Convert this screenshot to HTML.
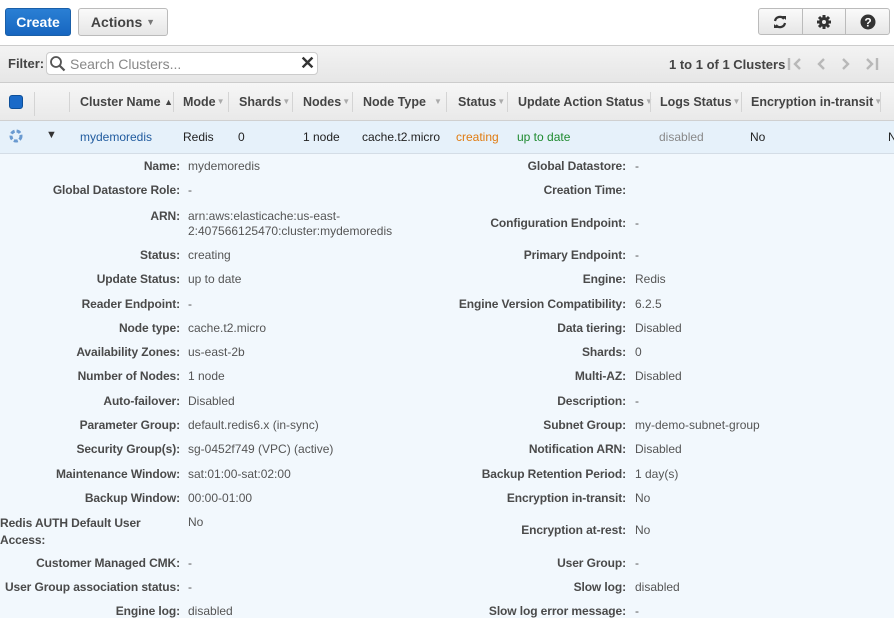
<!DOCTYPE html>
<html><head><meta charset="utf-8"><style>
*{box-sizing:border-box;margin:0;padding:0}
body{width:894px;height:612px;overflow:hidden;background:#f2f8fd;font-family:"Liberation Sans",Arial,sans-serif;font-size:12px;color:#444;position:relative}
.abs{position:absolute}
.top{left:0;top:0;width:894px;height:46px;background:#fff;border-bottom:1px solid #ccc}
.btn{position:absolute;border-radius:3px;font-size:14px;font-weight:bold;text-align:center;line-height:26px}
.create{left:5px;top:8px;width:66px;height:28px;background:linear-gradient(#2a7fd4,#1766c0);color:#fff;border:1px solid #1a5fa8}
.actions{left:78px;top:8px;width:90px;height:28px;background:linear-gradient(#fafafa,#e6e6e6);border:1px solid #bbb;color:#444}
.grp{left:758px;top:8px;width:132px;height:27px;border:1px solid #bbb;border-radius:3px;background:linear-gradient(#fafafa,#e6e6e6);display:flex}
.grp div{flex:1;border-right:1px solid #bbb;display:flex;align-items:center;justify-content:center}
.grp div:last-child{border-right:none}
.filt{left:0;top:46px;width:894px;height:37px;background:linear-gradient(#f3f3f3,#e6e6e6);border-bottom:1px solid #ccc}
.search{left:46px;top:52px;width:272px;height:23px;background:#fff;border:1px solid #ccc;border-radius:4px}
.th{left:0;top:83px;width:894px;height:38px;background:linear-gradient(#f6f6f6,#e9e9e9);border-bottom:1px solid #d0d0d0}
.th .h{position:absolute;top:12px;font-weight:bold;color:#444;font-size:12.5px;white-space:nowrap}
.sep{position:absolute;top:9px;width:1px;height:20px;background:#d4d4d4}
.row{left:0;top:121px;width:894px;height:33px;background:#e6f1fa;border-bottom:1px solid #d4dde6}
.row span{position:absolute;top:9px;font-size:12px;color:#222}
.l{position:absolute;text-align:right;font-weight:bold;color:#4a4a4a;white-space:nowrap;letter-spacing:-0.1px}
.v{position:absolute;color:#555;white-space:nowrap}
.ar{color:#aaa;font-size:8px;font-weight:normal;vertical-align:2px;margin-left:1px}
</style></head><body>
<div class="abs top"></div>
<div class="btn create">Create</div>
<div class="btn actions">Actions <span style="font-size:9px;color:#777;vertical-align:2px">&#9660;</span></div>
<div class="abs grp">
<div><svg width="18" height="18" viewBox="0 0 18 18"><path d="M4 8a5 5 0 0 1 9-2" fill="none" stroke="#333" stroke-width="2.2"/><path d="M14 10a5 5 0 0 1-9 2" fill="none" stroke="#333" stroke-width="2.2"/><path d="M11 3l4 0 0 4z M7 15l-4 0 0-4z" fill="#333"/></svg></div>
<div><svg width="16" height="16" viewBox="0 0 16 16"><circle cx="8" cy="8" r="5" fill="#333"/><g stroke="#333" stroke-width="3"><path d="M8 1v14M1 8h14M3 3l10 10M13 3L3 13"/></g><circle cx="8" cy="8" r="2" fill="#eee"/></svg></div>
<div><svg width="16" height="16" viewBox="0 0 16 16"><circle cx="8" cy="8" r="7.5" fill="#333"/><text x="8" y="12.5" font-size="12" font-weight="bold" text-anchor="middle" fill="#fff" font-family="Liberation Sans">?</text></svg></div>
</div>
<div class="abs filt"></div>
<div class="abs" style="left:8px;top:56px;font-weight:bold;font-size:13px;color:#444">Filter:</div>
<div class="abs search"></div>
<svg class="abs" style="left:49px;top:55px" width="17" height="17" viewBox="0 0 17 17"><circle cx="7" cy="7" r="5" fill="none" stroke="#555" stroke-width="1.8"/><path d="M10.5 10.5l5 5" stroke="#555" stroke-width="2.2"/></svg>
<div class="abs" style="left:70px;top:56px;font-size:14px;color:#888">Search Clusters...</div>
<div class="abs" style="left:300px;top:53px;font-size:18px;color:#333;font-weight:bold">&#10005;</div>
<div class="abs" style="left:669px;top:57px;font-size:13px;font-weight:bold;color:#444">1 to 1 of 1 Clusters</div>
<svg class="abs" style="left:786px;top:56px" width="94" height="16" viewBox="0 0 94 16" fill="none" stroke="#b8b8b8" stroke-width="2.4">
<path d="M3 2v12M14 3l-5 5 5 5"/><path d="M38 3l-5 5 5 5"/><path d="M57 3l5 5-5 5"/><path d="M81 3l5 5-5 5M91 2v12"/></svg>
<div class="abs th">
<div style="position:absolute;left:9px;top:12px;width:14px;height:14px;background:#1a6ac8;border:1px solid #0d4f99;border-radius:3px"></div>
<div class="sep" style="left:34px;height:24px"></div>
<div class="sep" style="left:69px"></div><div class="h" style="left:80px">Cluster Name <span style="font-size:9px;vertical-align:1px">&#9650;</span></div>
<div class="sep" style="left:173px"></div><div class="h" style="left:183px">Mode<span class="ar">&#9660;</span></div>
<div class="sep" style="left:228px"></div><div class="h" style="left:239px">Shards<span class="ar">&#9660;</span></div>
<div class="sep" style="left:292px"></div><div class="h" style="left:303px">Nodes<span class="ar">&#9660;</span></div>
<div class="sep" style="left:352px"></div><div class="h" style="left:363px">Node Type</div><div class="h" style="left:433px"><span class="ar">&#9660;</span></div>
<div class="sep" style="left:446px"></div><div class="h" style="left:458px">Status<span class="ar">&#9660;</span></div>
<div class="sep" style="left:507px"></div><div class="h" style="left:518px">Update Action Status<span class="ar">&#9660;</span></div>
<div class="sep" style="left:650px"></div><div class="h" style="left:660px">Logs Status<span class="ar">&#9660;</span></div>
<div class="sep" style="left:741px"></div><div class="h" style="left:751px">Encryption in-transit<span class="ar">&#9660;</span></div>
<div class="sep" style="left:880px"></div>
</div>
<div class="abs row">
<svg style="position:absolute;left:9px;top:8px" width="14" height="14" viewBox="0 0 14 14"><circle cx="7" cy="7" r="5" fill="none" stroke="#6a9ad0" stroke-width="3" stroke-dasharray="4 2"/></svg>
<span style="left:46px;top:8px;font-size:11px;color:#333">&#9660;</span>
<span style="left:80px;color:#1f5a9e">mydemoredis</span>
<span style="left:183px">Redis</span>
<span style="left:238px">0</span>
<span style="left:303px">1 node</span>
<span style="left:362px">cache.t2.micro</span>
<span style="left:456px;color:#e07b10">creating</span>
<span style="left:517px;color:#1d8a2e">up to date</span>
<span style="left:659px;color:#888">disabled</span>
<span style="left:750px">No</span>
<span style="left:888px">N</span>
</div>
<div class="l" style="right:714px;top:159px">Name:</div><div class="v" style="left:188px;top:159px">mydemoredis</div>
<div class="l" style="right:714px;top:183px">Global Datastore Role:</div><div class="v" style="left:188px;top:183px">-</div>
<div class="l" style="right:714px;top:209px">ARN:</div><div class="v" style="left:188px;top:209px;line-height:15px">arn:aws:elasticache:us-east-<br>2:407566125470:cluster:mydemoredis</div>
<div class="l" style="right:714px;top:248px">Status:</div><div class="v" style="left:188px;top:248px">creating</div>
<div class="l" style="right:714px;top:272px">Update Status:</div><div class="v" style="left:188px;top:272px">up to date</div>
<div class="l" style="right:714px;top:297px">Reader Endpoint:</div><div class="v" style="left:188px;top:297px">-</div>
<div class="l" style="right:714px;top:321px">Node type:</div><div class="v" style="left:188px;top:321px">cache.t2.micro</div>
<div class="l" style="right:714px;top:345px">Availability Zones:</div><div class="v" style="left:188px;top:345px">us-east-2b</div>
<div class="l" style="right:714px;top:369px">Number of Nodes:</div><div class="v" style="left:188px;top:369px">1 node</div>
<div class="l" style="right:714px;top:394px">Auto-failover:</div><div class="v" style="left:188px;top:394px">Disabled</div>
<div class="l" style="right:714px;top:418px">Parameter Group:</div><div class="v" style="left:188px;top:418px">default.redis6.x (in-sync)</div>
<div class="l" style="right:714px;top:442px">Security Group(s):</div><div class="v" style="left:188px;top:442px">sg-0452f749 (VPC) (active)</div>
<div class="l" style="right:714px;top:467px">Maintenance Window:</div><div class="v" style="left:188px;top:467px">sat:01:00-sat:02:00</div>
<div class="l" style="right:714px;top:491px">Backup Window:</div><div class="v" style="left:188px;top:491px">00:00-01:00</div>
<div class="l" style="left:0;top:515px;text-align:left;line-height:17px">Redis AUTH Default User<br>Access:</div><div class="v" style="left:188px;top:515px">No</div>
<div class="l" style="right:714px;top:556px">Customer Managed CMK:</div><div class="v" style="left:188px;top:556px">-</div>
<div class="l" style="right:714px;top:580px">User Group association status:</div><div class="v" style="left:188px;top:580px">-</div>
<div class="l" style="right:714px;top:604px">Engine log:</div><div class="v" style="left:188px;top:604px">disabled</div>

<div class="l" style="right:268px;top:159px">Global Datastore:</div><div class="v" style="left:635px;top:159px">-</div>
<div class="l" style="right:268px;top:183px">Creation Time:</div>
<div class="l" style="right:268px;top:216px">Configuration Endpoint:</div><div class="v" style="left:635px;top:216px">-</div>
<div class="l" style="right:268px;top:248px">Primary Endpoint:</div><div class="v" style="left:635px;top:248px">-</div>
<div class="l" style="right:268px;top:272px">Engine:</div><div class="v" style="left:635px;top:272px">Redis</div>
<div class="l" style="right:268px;top:297px">Engine Version Compatibility:</div><div class="v" style="left:635px;top:297px">6.2.5</div>
<div class="l" style="right:268px;top:321px">Data tiering:</div><div class="v" style="left:635px;top:321px">Disabled</div>
<div class="l" style="right:268px;top:345px">Shards:</div><div class="v" style="left:635px;top:345px">0</div>
<div class="l" style="right:268px;top:369px">Multi-AZ:</div><div class="v" style="left:635px;top:369px">Disabled</div>
<div class="l" style="right:268px;top:394px">Description:</div><div class="v" style="left:635px;top:394px">-</div>
<div class="l" style="right:268px;top:418px">Subnet Group:</div><div class="v" style="left:635px;top:418px">my-demo-subnet-group</div>
<div class="l" style="right:268px;top:442px">Notification ARN:</div><div class="v" style="left:635px;top:442px">Disabled</div>
<div class="l" style="right:268px;top:467px">Backup Retention Period:</div><div class="v" style="left:635px;top:467px">1 day(s)</div>
<div class="l" style="right:268px;top:491px">Encryption in-transit:</div><div class="v" style="left:635px;top:491px">No</div>
<div class="l" style="right:268px;top:523px">Encryption at-rest:</div><div class="v" style="left:635px;top:523px">No</div>
<div class="l" style="right:268px;top:556px">User Group:</div><div class="v" style="left:635px;top:556px">-</div>
<div class="l" style="right:268px;top:580px">Slow log:</div><div class="v" style="left:635px;top:580px">disabled</div>
<div class="l" style="right:268px;top:604px">Slow log error message:</div><div class="v" style="left:635px;top:604px">-</div>
</body></html>
